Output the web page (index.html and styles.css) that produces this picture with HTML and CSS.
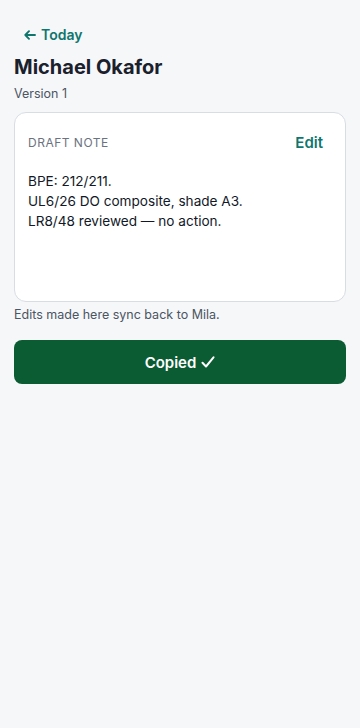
FILE: index.html
```html
<!DOCTYPE html>
<html lang="en">
<head>
  <meta charset="UTF-8">
  <meta name="viewport" content="width=device-width, initial-scale=1.0">
  <title>Draft Note - Michael Okafor</title>
  <link rel="stylesheet" href="styles.css">
</head>
<body>
  <main class="page">
    <a class="back-link" href="#">
      <svg class="back-icon" width="12" height="10" viewBox="0 0 12 10" fill="none" stroke="currentColor" stroke-width="1.9" stroke-linecap="round" stroke-linejoin="round"><path d="M11 5H1.3M5 1.2L1.3 5L5 8.8"/></svg>
      Today
    </a>
    <h1 class="patient-name">Michael Okafor</h1>
    <p class="version">Version 1</p>

    <!-- Draft note card -->
    <section class="note-card">
      <div class="note-header">
        <span class="note-label">DRAFT NOTE</span>
        <button class="edit-btn" type="button">Edit</button>
      </div>
      <div class="note-body">
        <p>BPE: 212/211.</p>
        <p>UL6/26 DO composite, shade A3.</p>
        <p>LR8/48 reviewed — no action.</p>
      </div>
    </section>
    <p class="sync-hint">Edits made here sync back to Mila.</p>

    <button class="copy-btn" type="button">
      Copied
      <svg class="check-icon" width="14" height="12" viewBox="0 0 14 12" fill="none" stroke="currentColor" stroke-width="2" stroke-linecap="round" stroke-linejoin="round"><path d="M1.5 6.8L5 10.5L12.5 1.3"/></svg>
    </button>
  </main>
</body>
</html>
```

FILE: styles.css
```css
/* General Styles */
body {
  font-family: Inter, "Noto Sans", Arial, sans-serif;
  margin: 0;
  padding: 0;
  background-color: #f6f7f9;
  color: #111827;
}

.page {
  padding: 14px;
  display: flex;
  flex-direction: column;
}

.back-link {
  align-self: flex-start;
  display: flex;
  align-items: center;
  gap: 5px;
  padding: 11px 10px 0;
  font-size: 14px;
  line-height: 20px;
  font-weight: 600;
  color: #0f766e;
  text-decoration: none;
}

.patient-name {
  margin: 8px 0 0;
  font-size: 20px;
  line-height: 28px;
  font-weight: 700;
  color: #1a202c;
}

.version {
  margin: 4px 0 0;
  font-size: 12.5px;
  line-height: 18px;
  color: #4b5563;
}

/* Note card */
.note-card {
  margin-top: 9px;
  background: #fff;
  border: 1px solid #d8dde3;
  border-radius: 12px;
  padding: 14px 14px 14px 13px;
}

.note-header {
  display: flex;
  justify-content: space-between;
  align-items: center;
  height: 30px;
}

.note-label {
  font-size: 12px;
  letter-spacing: 0.5px;
  color: #6b7280;
}

.edit-btn {
  background: none;
  border: none;
  padding: 0 8px;
  font-family: inherit;
  font-size: 15px;
  font-weight: 600;
  color: #0f766e;
  cursor: pointer;
}

.note-body {
  margin-top: 14px;
  min-height: 116px;
  font-size: 13.6px;
  line-height: 20px;
  color: #111827;
}

.note-body p {
  margin: 0;
}

.sync-hint {
  margin: 4px 0 0;
  font-size: 12.5px;
  line-height: 18px;
  color: #4b5563;
}

.copy-btn {
  margin-top: 16px;
  height: 44px;
  display: flex;
  align-items: center;
  justify-content: center;
  gap: 5px;
  border: none;
  border-radius: 8px;
  background-color: #0b5c33;
  color: #fff;
  font-family: inherit;
  font-size: 15px;
  font-weight: 600;
  cursor: pointer;
}
```
